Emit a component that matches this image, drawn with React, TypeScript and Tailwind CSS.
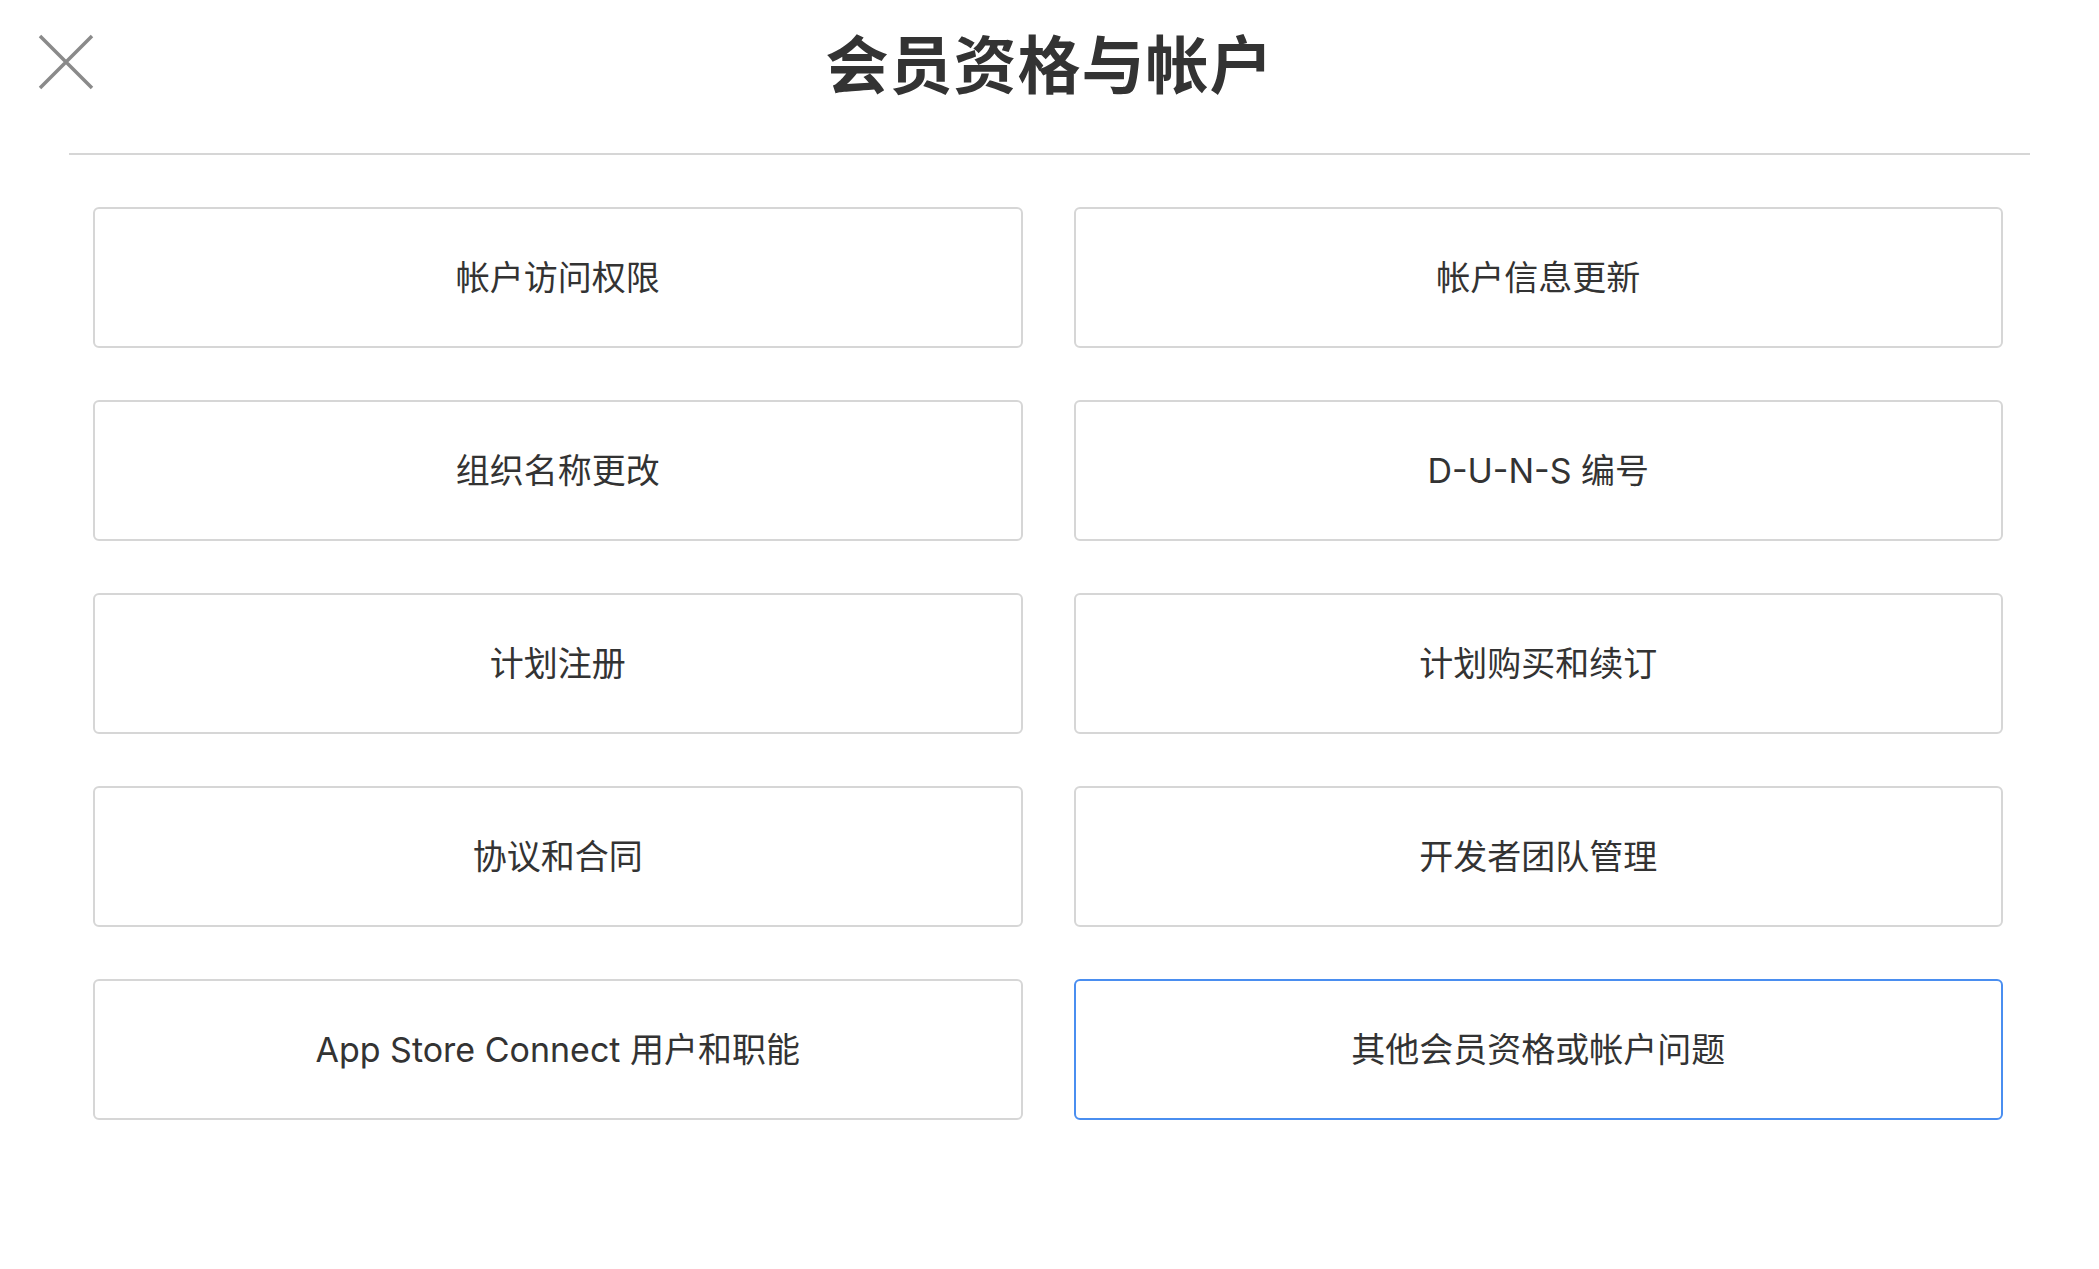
const items = [
  "帐户访问权限",
  "帐户信息更新",
  "组织名称更改",
  "D-U-N-S 编号",
  "计划注册",
  "计划购买和续订",
  "协议和合同",
  "开发者团队管理",
  "App Store Connect 用户和职能",
  "其他会员资格或帐户问题",
];

export default function App() {
  return (
    <div
      className="min-h-screen w-full bg-white text-[#333333]"
      style={{ fontFamily: 'Inter, "Noto Sans CJK SC", sans-serif' }}
    >
      {/* header */}
      <div className="relative flex h-[155px] items-center justify-center mx-[69px] border-b-2 border-[#d6d6d6]">
        <button className="absolute left-[-35px] top-[30px] text-[#8a8a8a]">
          <svg width="64" height="64" viewBox="0 0 64 64" fill="none" stroke="currentColor" strokeWidth={3.5}>
            <path d="M6 6 L58 58 M58 6 L6 58" />
          </svg>
        </button>
        <h1 className="mb-[22px] text-[63px] font-bold tracking-[1px]">会员资格与帐户</h1>
      </div>

      <div className="grid grid-cols-2 gap-x-[51px] gap-y-[52px] pl-[93px] pr-[96px] pt-[52px] pb-10">
        {items.map((label, i) => (
          <button
            key={label}
            className={`flex h-[141px] items-center justify-center rounded-[6px] border-2 bg-white text-[34px] ${
              i === items.length - 1 ? "border-[#4a8ef0]" : "border-[#d6d6d6]"
            }`}
          >
            {label}
          </button>
        ))}
      </div>
    </div>
  );
}
